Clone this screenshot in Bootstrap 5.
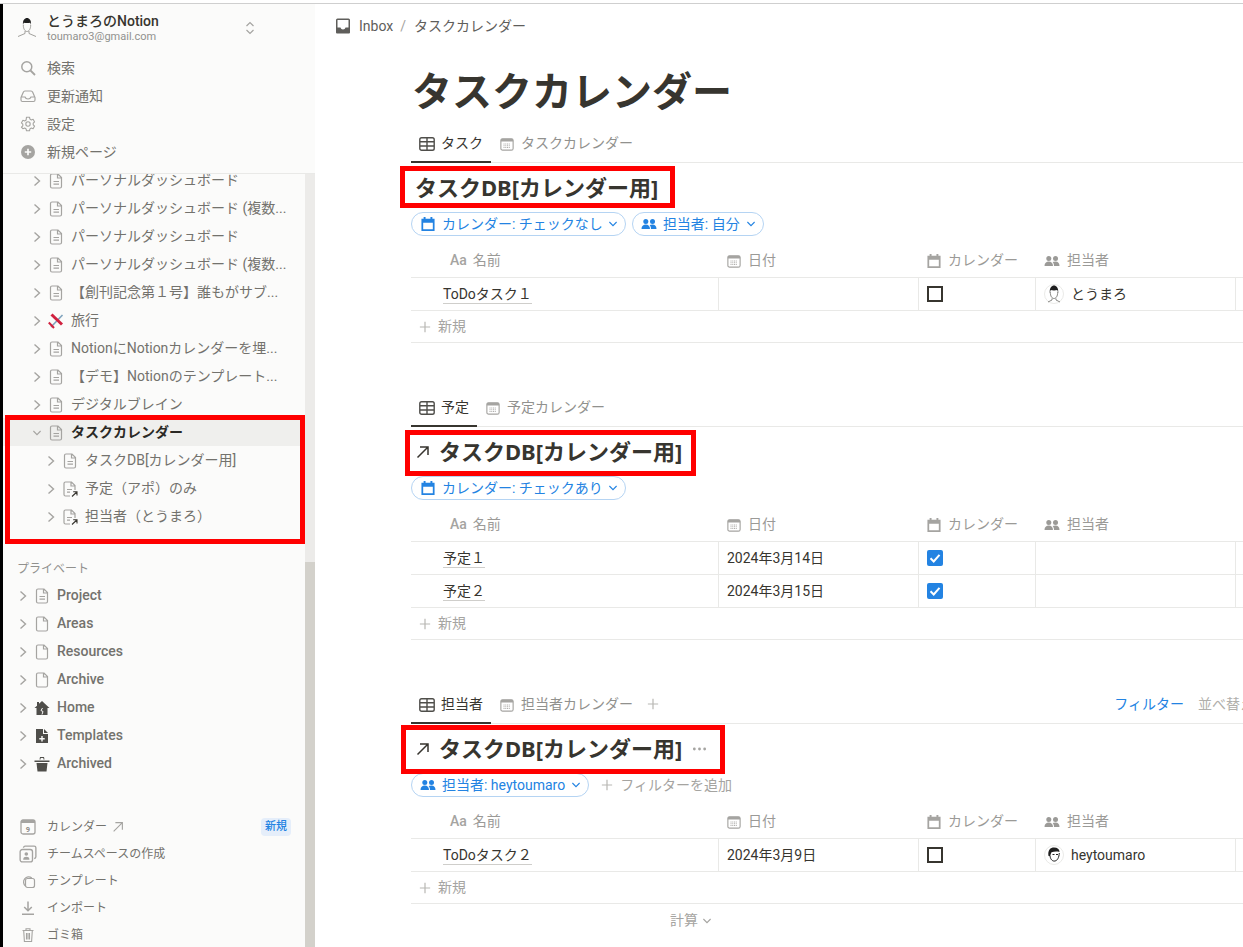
<!DOCTYPE html>
<html lang="ja">
<head>
<meta charset="UTF-8" />
<title>タスクカレンダー</title>
<link href="https://cdn.jsdelivr.net/npm/bootstrap@5.3.3/dist/css/bootstrap.min.css" rel="stylesheet" />
<style>
  html, body { height: 947px; overflow: hidden; }
  body { font-family: Roboto, "Noto Sans CJK JP", sans-serif; font-size: 14px; color: #37352f; background: #fff; padding-top: 3px; }
  .app { height: 944px; border-top: 1px solid #cfcfcf; }
  svg { flex-shrink: 0; display: block; }

  /* sidebar */
  .sidebar { width: 315px; flex-shrink: 0; background: #fbfbfa; border-left: 3px solid #000; color: #73726d; }
  .side-head { height: 170px; border-bottom: 1px solid #e9e9e7; }
  .account { height: 50px; padding: 0 60px 2px 13px; }
  .account .avatar-lg { margin-right: 9px; }
  .account-name { color: #37352f; line-height: 18px; font-weight: 500; }
  .account-mail { font-size: 11px; line-height: 14px; color: #91918e; }
  .head-row { height: 28px; padding-left: 17px; gap: 11px; }
  .side-body { min-height: 0; overflow: hidden; }
  .tree { margin-top: -8px; }
  .side-row { height: 28px; white-space: nowrap; padding-top: 2px; }
  .lv0 { padding-left: 15px; font-weight: 500; }
  .lv1 { padding-left: 29px; }
  .lv2 { padding-left: 43px; }
  .side-row .chev { margin-right: 6px; }
  .side-row .ico { margin-right: 7px; }
  .side-row.selected { background: #efefed; color: #2a2925; font-weight: 700; }
  .chev-grey { color: #a5a4a1; }
  .picked { position: relative; }
  .private-label { height: 24px; margin-top: 27px; padding-left: 14px; font-size: 12px; line-height: 24px; color: #91918e; }
  .side-foot { margin-top: 36px; font-size: 12px; }
  .foot-row { height: 27px; padding: 2px 14px 0 17px; gap: 11px; }
  .foot-label { gap: 4px; }
  .team-ico { margin: 0 -1px; }
  .badge-new { background: #e5eefa; color: #2383e2; font-size: 11px; line-height: 18px; padding: 0 4px; border-radius: 4px; font-weight: 500; }
  .track { width: 10px; flex-shrink: 0; background: #ecebe9; }
  .track-space { height: 388px; }
  .thumb { background: #d3d1cb; }

  /* main */
  .main { min-width: 0; overflow: hidden; }
  .crumbs { height: 44px; padding-left: 20px; color: #5f5e5b; }
  .crumbs .sep { color: #a5a4a1; margin: 0 8px 0 7px; }
  .content { padding-left: 96px; }
  .page-title { font-family: "Noto Sans CJK JP", sans-serif; font-size: 40px; line-height: 70px; font-weight: 700; margin: 6px 0 0 1px; color: #37352f; }
  .block { width: 843px; margin-bottom: 45px; }
  .tabs { height: 39px; border-bottom: 1px solid #e9e9e7; }
  .tab { height: 39px; padding: 0 8px; gap: 7px; color: #91918e; margin-bottom: -1px; }
  .tab.side { margin-left: 1px; }
  .tab.active { color: #37352f; border-bottom: 2px solid #37352f; gap: 6px; padding-top: 2px; }
  .tab-plus { margin-left: 6px; }
  .tab-links { gap: 14px; color: #b0afab; }
  .tab-links .blue { color: #2383e2; }
  .db-title { position: relative; height: 49px; padding-left: 4px; font-family: "Noto Sans", "Noto Sans CJK JP", sans-serif; font-size: 22px; font-weight: 700; gap: 8px; }
  .db-more { margin-left: 2px; }
  .red-box { position: absolute; border: 5px solid #f00; pointer-events: none; }
  .red-1 { left: -11px; top: 3px; width: 275px; height: 42px; }
  .red-2 { left: -6px; top: 3px; width: 291px; height: 46px; }
  .red-3 { left: -10px; top: 1px; width: 324px; height: 49px; }
  .red-side { left: 2px; top: -3px; width: 300px; height: 129px; }
  .filters { height: 24px; gap: 6px; }
  .pill { height: 24px; border: 1px solid #b5d4f3; border-radius: 12px; color: #2383e2; padding: 0 7px 0 9px; gap: 7px; background: #fff; }
  .pill .pill-chev { margin-left: -2px; }
  .pill.people { padding-left: 8px; gap: 6px; }
  .pill.people .pill-chev { margin-left: 0; }
  .add-filter { color: #a5a4a1; gap: 7px; margin-left: 6px; }
  .db-head { margin-top: 8px; height: 34px; border-bottom: 1px solid #e9e9e7; color: #9b9a97; }
  .ic-muted { color: #a5a4a1; }
  .db-row { height: 33px; border-bottom: 1px solid #e9e9e7; }
  .c-name { width: 308px; flex-shrink: 0; }
  .c-date { width: 200px; flex-shrink: 0; }
  .c-cal { width: 117px; flex-shrink: 0; }
  .c-person { width: 200px; flex-shrink: 0; }
  .cell { padding-left: 8px; gap: 7px; height: 100%; }
  .db-row .cell { border-right: 1px solid #e9e9e7; }
  .db-row .cell:last-child { border-right: 0; }
  .db-head .c-name { padding-left: 39px; gap: 6px; }
  .aa { font-weight: 500; color: #a5a4a1; }
  .row-title { margin-left: 24px; line-height: 18px; border-bottom: 1px solid #cfcecb; }
  .check { width: 16px; height: 16px; border: 2px solid #37352f; }
  .check.on { background: #2383e2; border: 0; border-radius: 2px; }
  .db-new { height: 32px; border-bottom: 1px solid #e9e9e7; padding-left: 8px; gap: 7px; color: #a5a4a1; }
  .calc { height: 33px; padding-left: 259px; gap: 4px; color: #a5a4a1; }
</style>
</head>
<body>

<svg class="d-none" xmlns="http://www.w3.org/2000/svg">
  <symbol id="i-chev" viewBox="0 0 10 14"><path d="M2.500 2.500 7.500 7l-5 4.500" fill="none" stroke="#a5a4a1" stroke-width="1.400"/></symbol>
  <symbol id="i-chev-d" viewBox="0 0 12 10"><path d="M1.500 2.500 6 7l4.500-4.500" fill="none" stroke="currentColor" stroke-width="1.400"/></symbol>
  <symbol id="i-page" viewBox="0 0 16 16"><path d="M3.500 1h6l3.500 3.500v9A1.500 1.500 0 0 1 11.500 15h-8A1.500 1.500 0 0 1 2 13.500v-11A1.500 1.500 0 0 1 3.500 1ZM9 1.500V5h3.700M5 8.500h5.500M5 11.200h5.500" transform="translate(.5)" fill="none" stroke="#a5a4a1" stroke-width="1.200"/></symbol>
  <symbol id="i-blank" viewBox="0 0 16 16"><path d="M3.500 1h6l3.500 3.500v9A1.500 1.500 0 0 1 11.500 15h-8A1.500 1.500 0 0 1 2 13.500v-11A1.500 1.500 0 0 1 3.500 1ZM9 1.500V5h3.700" transform="translate(.5)" fill="none" stroke="#a5a4a1" stroke-width="1.200"/></symbol>
  <symbol id="i-link" viewBox="0 0 16 16"><path d="M3.500 1h6l3.500 3.500V9M9 1.500V5h3.700M5 8.500h5M5 11.200h3M8 15H3.500A1.500 1.500 0 0 1 2 13.500v-11A1.500 1.500 0 0 1 3.500 1" fill="none" stroke="#a5a4a1" stroke-width="1.200"/><path d="M10 15.500l4.800-4.500M11.200 10.800h3.800v3.800" fill="none" stroke="#37352f" stroke-width="1.100"/></symbol>
  <symbol id="i-search" viewBox="0 0 16 16"><circle cx="6.800" cy="6.800" r="5" fill="none" stroke="#a5a4a1" stroke-width="1.500"/><path d="M10.500 10.500 15 15" stroke="#a5a4a1" stroke-width="1.800"/></symbol>
  <symbol id="i-inbox" viewBox="0 0 16 16"><path d="M1 9.500 3.300 4.200A2 2 0 0 1 5 3h6a2 2 0 0 1 1.700 1.200L15 9.500V12a1.500 1.500 0 0 1-1.500 1.500h-11A1.500 1.500 0 0 1 1 12ZM1 9h4c.5 1.400 1.500 2 3 2s2.500-.6 3-2h4" fill="none" stroke="#a5a4a1" stroke-width="1.200"/></symbol>
  <symbol id="i-gear" viewBox="0 0 16 16"><path d="M6.500 1.200h3l.4 1.900 1.400.8 1.800-.6 1.500 2.600-1.400 1.300v1.600l1.400 1.300-1.500 2.600-1.800-.6-1.400.8-.4 1.900h-3l-.4-1.900-1.400-.8-1.800.6L1.400 11.100l1.400-1.300V8.200L1.400 6.900l1.500-2.600 1.800.6 1.400-.8Z" fill="none" stroke="#a5a4a1" stroke-width="1.100" stroke-linejoin="round"/><circle cx="8" cy="8" r="2.200" fill="none" stroke="#a5a4a1" stroke-width="1.100"/></symbol>
  <symbol id="i-plus-c" viewBox="0 0 16 16"><circle cx="8" cy="8" r="7" fill="#a5a4a1"/><path d="M8 4.800v6.400M4.800 8h6.400" stroke="#fbfbfa" stroke-width="1.700"/></symbol>
  <symbol id="i-updown" viewBox="0 0 10 14"><path d="M1.500 5 5 1.500 8.500 5M1.500 9 5 12.500 8.500 9" fill="none" stroke="#a5a4a1" stroke-width="1.200"/></symbol>
  <symbol id="i-plane" viewBox="0 0 16 16"><path d="M3 14 14.500 2" stroke="#7fa3bd" stroke-width="1.600"/><path d="M3.500 1.500 14 11.500" stroke="#d0213f" stroke-width="3"/><path d="M.800 9.500 6 15" stroke="#d0213f" stroke-width="2"/></symbol>
  <symbol id="i-home" viewBox="0 0 16 16"><path d="M8 1 15.500 8H13.500v7H2.500V8H.500L3 5.700V2h2v1.800Z" fill="#4f4e4a"/><path d="M8.500 8 7 10.500l2 1-1 3" fill="none" stroke="#fbfbfa" stroke-width="1"/></symbol>
  <symbol id="i-tpl" viewBox="0 0 16 16"><path d="M2 1h7v5h5v9H2Z M10 1l4 4h-4Z" fill="#4f4e4a"/><path d="M8 8v5.500M5.300 10.800h5.400" stroke="#fbfbfa" stroke-width="1.400"/></symbol>
  <symbol id="i-trash-f" viewBox="0 0 16 16"><path d="M.500 4.500h15V6H.500ZM6 1h4l.5 2.500h-1L9.300 2H6.700l-.2 1.500h-1ZM2.500 7h11l-1 8.500h-9Z" fill="#4f4e4a"/></symbol>
  <symbol id="i-cal9" viewBox="0 0 16 16"><rect x="1" y="1" width="14" height="14" rx="2" fill="none" stroke="#a5a4a1" stroke-width="1.300"/><path d="M1 2.500a1.500 1.500 0 0 1 1.500-1.500h11A1.500 1.500 0 0 1 15 2.500V4H1Z" fill="#a5a4a1"/><text x="8" y="12.800" text-anchor="middle" font-size="7.500" font-weight="700" fill="#8e8d89">9</text></symbol>
  <symbol id="i-team" viewBox="0 0 16 16"><rect x="1" y="4" width="11" height="11" rx="2" fill="none" stroke="#a5a4a1" stroke-width="1.200"/><path d="M4 2.500A1.500 1.500 0 0 1 5.500 1h8A1.500 1.500 0 0 1 15 2.500v8a1.500 1.500 0 0 1-1.500 1.500" fill="none" stroke="#a5a4a1" stroke-width="1.200"/><circle cx="6.500" cy="8" r="1.600" fill="#a5a4a1"/><path d="M3.700 13c0-2 1.300-2.600 2.800-2.600s2.800.6 2.800 2.600Z" fill="#a5a4a1"/></symbol>
  <symbol id="i-copy" viewBox="0 0 16 16"><path d="M5.500 13A4.800 4.800 0 1 1 11.800 5" fill="none" stroke="#a5a4a1" stroke-width="1.200"/><rect x="5.500" y="5.500" width="9" height="9" rx="2" fill="#fbfbfa" stroke="#a5a4a1" stroke-width="1.200"/></symbol>
  <symbol id="i-import" viewBox="0 0 16 16"><path d="M8 1.500v9M4.200 7 8 10.800 11.800 7M2 14.300h12" fill="none" stroke="#a5a4a1" stroke-width="1.500"/></symbol>
  <symbol id="i-trash" viewBox="0 0 16 16"><path d="M2.500 3.500h11M6 3.500V1.800h4v1.700M3.700 3.500l.7 11h7.200l.7-11M6.500 6v6.500M8 6v6.500M9.500 6v6.500" fill="none" stroke="#a5a4a1" stroke-width="1.100"/></symbol>
  <symbol id="i-arrow" viewBox="0 0 16 16"><path d="M3 13 13 3M5 3h8v8" fill="none" stroke="#a5a4a1" stroke-width="1.300"/></symbol>
  <symbol id="i-arrow-d" viewBox="0 0 16 16"><path d="M2.500 13.500 13 3M5 3h8v8" fill="none" stroke="#37352f" stroke-width="1.500"/></symbol>
  <symbol id="i-tray" viewBox="0 0 16 16"><path d="M2.500 .5h11A1.500 1.500 0 0 1 15 2v12.500a1 1 0 0 1-1 1H2a1 1 0 0 1-1-1V2A1.500 1.500 0 0 1 2.500 .5Z" fill="#5f5e5b"/><path d="M2.500 2h11v7.500H10.500c-.3 1.300-1.200 2-2.500 2s-2.200-.7-2.500-2h-3Z" fill="#fff"/></symbol>
  <symbol id="i-table" viewBox="0 0 16 16"><rect x=".8" y="1.800" width="14.400" height="12.400" rx="1.800" fill="none" stroke="#4f4e4a" stroke-width="1.400"/><path d="M1 5.800h14M1 10h14M8 2v12" stroke="#4f4e4a" stroke-width="1.400"/></symbol>
  <symbol id="i-calview" viewBox="0 0 16 16"><rect x="1" y="2" width="14" height="13" rx="2" fill="none" stroke="#a5a4a1" stroke-width="1.300"/><path d="M1 3.500A1.500 1.500 0 0 1 2.500 2h11A1.500 1.500 0 0 1 15 3.500V5H1Z" fill="#a5a4a1"/><path d="M4 8h8M4 10h8M4 12h8" stroke="#a5a4a1" stroke-width="1" stroke-dasharray="1.200 .8"/></symbol>
  <symbol id="i-calfill" viewBox="0 0 16 16"><path d="M3 0h2.200v2h5.600V0H13v2h2.500v14H.500V2H3Zm-.5 6.500v7.500h11V6.500Z" fill="currentColor" fill-rule="evenodd"/></symbol>
  <symbol id="i-people" viewBox="0 0 16 16"><circle cx="4.800" cy="5.500" r="2.500" fill="currentColor"/><circle cx="11.500" cy="5.500" r="2.500" fill="currentColor"/><path d="M.500 13c0-3 1.800-4.500 4.300-4.500S9 10 9 13ZM10 13c0-1.700-.5-3-1.400-3.900.8-.4 1.800-.6 2.900-.6 2.500 0 4 1.500 4 4.500Z" fill="currentColor"/></symbol>
  <symbol id="i-plus" viewBox="0 0 14 14"><path d="M7 1v12M1 7h12" stroke="#b8b7b3" stroke-width="1.400"/></symbol>
  <symbol id="i-tick" viewBox="0 0 16 16"><path d="M3.500 8.300 6.700 11.500 12.500 4.800" fill="none" stroke="#fff" stroke-width="2"/></symbol>
  <symbol id="i-dots" viewBox="0 0 16 4"><circle cx="2.500" cy="2" r="1.500" fill="#a5a4a1"/><circle cx="8" cy="2" r="1.500" fill="#a5a4a1"/><circle cx="13.500" cy="2" r="1.500" fill="#a5a4a1"/></symbol>
  <symbol id="i-man" viewBox="0 0 22 22"><path d="M7 8C6.500 3 8.800 1 11 1s4.500 2 4 7l-.7-2.300c-2 .5-4.300.5-6.600 0Z" fill="#1f1f1f"/><path d="M7.300 8c0 4 1.800 6.500 3.700 6.500s3.700-2.500 3.700-6.500M9 14v2.500l-7 3M13 14v2.500l7 3" fill="none" stroke="#8a8984" stroke-width=".8"/></symbol>
  <symbol id="i-face" viewBox="0 0 20 20"><circle cx="10" cy="10" r="9.500" fill="#fff" stroke="#e3e3e1" stroke-width=".8"/><path d="M5.800 9C5.300 3.500 7.800 1.500 10 1.500s4.700 2 4.200 7.500l-.9-3c-2 .5-4.600.5-6.600 0Z" fill="#1f1f1f"/><path d="M6.300 8c0 4.500 1.800 6.500 3.700 6.500s3.700-2 3.700-6.500M8 14.500v1.500L4 18M12 14.500v1.500l4 2" fill="none" stroke="#6b6a66" stroke-width=".8"/></symbol>
  <symbol id="i-face2" viewBox="0 0 20 20"><circle cx="10" cy="10" r="9.500" fill="#fff" stroke="#e3e3e1" stroke-width=".8"/><path d="M4.500 11C3.500 5 6.500 2.500 10 2.500s5.500 1.500 5.500 4.500c-2.500-.6-5.500-.5-8 .3-.6 1-1 2.200-1.200 3.700Z" fill="#1f1f1f"/><path d="M6 11c.5 3.500 2.500 5.500 5 5 2.500-.5 4-3.500 4.300-8" fill="none" stroke="#1f1f1f" stroke-width="1"/><path d="M8.500 9.500h2M12 9.500h2" stroke="#1f1f1f" stroke-width="1"/></symbol>
</svg>

<div class="app d-flex">
  <aside class="sidebar d-flex flex-column">
    <div class="side-head">
      <div class="account d-flex align-items-center">
        <svg class="avatar-lg" width="22" height="22"><use href="#i-man"/></svg>
        <div class="flex-grow-1">
          <div class="account-name">とうまろのNotion</div>
          <div class="account-mail">toumaro3@gmail.com</div>
        </div>
        <svg width="10" height="14"><use href="#i-updown"/></svg>
      </div>
      <div class="head-row d-flex align-items-center"><svg width="16" height="16"><use href="#i-search"/></svg>検索</div>
      <div class="head-row d-flex align-items-center"><svg width="16" height="16"><use href="#i-inbox"/></svg>更新通知</div>
      <div class="head-row d-flex align-items-center"><svg width="16" height="16"><use href="#i-gear"/></svg>設定</div>
      <div class="head-row d-flex align-items-center"><svg width="16" height="16"><use href="#i-plus-c"/></svg>新規ページ</div>
    </div>

    <div class="side-body flex-grow-1 d-flex">
      <div class="flex-grow-1">
        <div class="tree">
          <div class="side-row lv1 d-flex align-items-center"><svg class="chev" width="10" height="14"><use href="#i-chev"/></svg><svg class="ico" width="16" height="16"><use href="#i-page"/></svg>パーソナルダッシュボード</div>
          <div class="side-row lv1 d-flex align-items-center"><svg class="chev" width="10" height="14"><use href="#i-chev"/></svg><svg class="ico" width="16" height="16"><use href="#i-page"/></svg>パーソナルダッシュボード (複数...</div>
          <div class="side-row lv1 d-flex align-items-center"><svg class="chev" width="10" height="14"><use href="#i-chev"/></svg><svg class="ico" width="16" height="16"><use href="#i-page"/></svg>パーソナルダッシュボード</div>
          <div class="side-row lv1 d-flex align-items-center"><svg class="chev" width="10" height="14"><use href="#i-chev"/></svg><svg class="ico" width="16" height="16"><use href="#i-page"/></svg>パーソナルダッシュボード (複数...</div>
          <div class="side-row lv1 d-flex align-items-center"><svg class="chev" width="10" height="14"><use href="#i-chev"/></svg><svg class="ico" width="16" height="16"><use href="#i-page"/></svg>【創刊記念第１号】誰もがサブ...</div>
          <div class="side-row lv1 d-flex align-items-center"><svg class="chev" width="10" height="14"><use href="#i-chev"/></svg><svg class="ico" width="16" height="16"><use href="#i-plane"/></svg>旅行</div>
          <div class="side-row lv1 d-flex align-items-center"><svg class="chev" width="10" height="14"><use href="#i-chev"/></svg><svg class="ico" width="16" height="16"><use href="#i-page"/></svg>NotionにNotionカレンダーを埋...</div>
          <div class="side-row lv1 d-flex align-items-center"><svg class="chev" width="10" height="14"><use href="#i-chev"/></svg><svg class="ico" width="16" height="16"><use href="#i-page"/></svg>【デモ】Notionのテンプレート...</div>
          <div class="side-row lv1 d-flex align-items-center"><svg class="chev" width="10" height="14"><use href="#i-chev"/></svg><svg class="ico" width="16" height="16"><use href="#i-page"/></svg>デジタルブレイン</div>
          <div class="picked">
            <div class="side-row lv1 selected d-flex align-items-center"><svg class="chev chev-grey" width="10" height="8"><use href="#i-chev-d"/></svg><svg class="ico" width="16" height="16"><use href="#i-page"/></svg>タスクカレンダー</div>
            <div class="side-row lv2 d-flex align-items-center"><svg class="chev" width="10" height="14"><use href="#i-chev"/></svg><svg class="ico" width="16" height="16"><use href="#i-page"/></svg>タスクDB[カレンダー用]</div>
            <div class="side-row lv2 d-flex align-items-center"><svg class="chev" width="10" height="14"><use href="#i-chev"/></svg><svg class="ico" width="16" height="16"><use href="#i-link"/></svg>予定（アポ）のみ</div>
            <div class="side-row lv2 d-flex align-items-center"><svg class="chev" width="10" height="14"><use href="#i-chev"/></svg><svg class="ico" width="16" height="16"><use href="#i-link"/></svg>担当者（とうまろ）</div>
            <div class="red-box red-side"></div>
          </div>
          <div class="private-label">プライベート</div>
          <div class="side-row lv0 d-flex align-items-center"><svg class="chev" width="10" height="14"><use href="#i-chev"/></svg><svg class="ico" width="16" height="16"><use href="#i-page"/></svg>Project</div>
          <div class="side-row lv0 d-flex align-items-center"><svg class="chev" width="10" height="14"><use href="#i-chev"/></svg><svg class="ico" width="16" height="16"><use href="#i-blank"/></svg>Areas</div>
          <div class="side-row lv0 d-flex align-items-center"><svg class="chev" width="10" height="14"><use href="#i-chev"/></svg><svg class="ico" width="16" height="16"><use href="#i-blank"/></svg>Resources</div>
          <div class="side-row lv0 d-flex align-items-center"><svg class="chev" width="10" height="14"><use href="#i-chev"/></svg><svg class="ico" width="16" height="16"><use href="#i-blank"/></svg>Archive</div>
          <div class="side-row lv0 d-flex align-items-center"><svg class="chev" width="10" height="14"><use href="#i-chev"/></svg><svg class="ico" width="16" height="16"><use href="#i-home"/></svg>Home</div>
          <div class="side-row lv0 d-flex align-items-center"><svg class="chev" width="10" height="14"><use href="#i-chev"/></svg><svg class="ico" width="16" height="16"><use href="#i-tpl"/></svg>Templates</div>
          <div class="side-row lv0 d-flex align-items-center"><svg class="chev" width="10" height="14"><use href="#i-chev"/></svg><svg class="ico" width="16" height="16"><use href="#i-trash-f"/></svg>Archived</div>
        </div>
        <div class="side-foot">
          <div class="foot-row d-flex align-items-center"><svg width="16" height="16"><use href="#i-cal9"/></svg><span class="foot-label d-flex align-items-center">カレンダー<svg width="14" height="14"><use href="#i-arrow"/></svg></span><span class="badge-new ms-auto">新規</span></div>
          <div class="foot-row d-flex align-items-center"><svg class="team-ico" width="18" height="18"><use href="#i-team"/></svg>チームスペースの作成</div>
          <div class="foot-row d-flex align-items-center"><svg width="16" height="16"><use href="#i-copy"/></svg>テンプレート</div>
          <div class="foot-row d-flex align-items-center"><svg width="16" height="16"><use href="#i-import"/></svg>インポート</div>
          <div class="foot-row d-flex align-items-center"><svg width="16" height="16"><use href="#i-trash"/></svg>ゴミ箱</div>
        </div>
      </div>
      <div class="track d-flex flex-column">
        <div class="track-space"></div>
        <div class="thumb flex-grow-1"></div>
      </div>
    </div>
  </aside>

  <main class="main flex-grow-1">
    <div class="crumbs d-flex align-items-center">
      <svg class="me-2" width="16" height="16"><use href="#i-tray"/></svg>Inbox<span class="sep">/</span>タスクカレンダー
    </div>
    <div class="content">
      <h1 class="page-title">タスクカレンダー</h1>

      <section class="block">
        <div class="tabs d-flex">
          <div class="tab active d-flex align-items-center"><svg width="16" height="16"><use href="#i-table"/></svg>タスク</div>
          <div class="tab side d-flex align-items-center"><svg width="14" height="14"><use href="#i-calview"/></svg>タスクカレンダー</div>
        </div>
        <div class="db-title d-flex align-items-center">タスクDB[カレンダー用]<div class="red-box red-1"></div></div>
        <div class="filters d-flex">
          <div class="pill d-flex align-items-center"><svg width="14" height="14"><use href="#i-calfill"/></svg>カレンダー: チェックなし<svg class="pill-chev" width="10" height="8"><use href="#i-chev-d"/></svg></div>
          <div class="pill people d-flex align-items-center"><svg width="16" height="16"><use href="#i-people"/></svg>担当者: 自分<svg class="pill-chev" width="10" height="8"><use href="#i-chev-d"/></svg></div>
        </div>
        <div class="db-head d-flex align-items-center">
          <div class="c-name cell d-flex align-items-center"><span class="aa">Aa</span>名前</div>
          <div class="c-date cell d-flex align-items-center"><svg width="14" height="14"><use href="#i-calview"/></svg>日付</div>
          <div class="c-cal cell d-flex align-items-center"><svg class="ic-muted" width="14" height="14"><use href="#i-calfill"/></svg>カレンダー</div>
          <div class="c-person cell d-flex align-items-center"><svg width="16" height="16"><use href="#i-people"/></svg>担当者</div>
        </div>
        <div class="db-row d-flex">
          <div class="c-name cell d-flex align-items-center"><span class="row-title">ToDoタスク１</span></div>
          <div class="c-date cell d-flex align-items-center"></div>
          <div class="c-cal cell d-flex align-items-center"><div class="check"></div></div>
          <div class="c-person cell d-flex align-items-center"><svg width="20" height="20"><use href="#i-face"/></svg>とうまろ</div>
          <div class="cell flex-grow-1"></div>
        </div>
        <div class="db-new d-flex align-items-center"><svg width="12" height="12"><use href="#i-plus"/></svg>新規</div>
      </section>

      <section class="block">
        <div class="tabs d-flex">
          <div class="tab active d-flex align-items-center"><svg width="16" height="16"><use href="#i-table"/></svg>予定</div>
          <div class="tab side d-flex align-items-center"><svg width="14" height="14"><use href="#i-calview"/></svg>予定カレンダー</div>
        </div>
        <div class="db-title d-flex align-items-center"><svg width="16" height="16"><use href="#i-arrow-d"/></svg>タスクDB[カレンダー用]<div class="red-box red-2"></div></div>
        <div class="filters d-flex">
          <div class="pill d-flex align-items-center"><svg width="14" height="14"><use href="#i-calfill"/></svg>カレンダー: チェックあり<svg class="pill-chev" width="10" height="8"><use href="#i-chev-d"/></svg></div>
        </div>
        <div class="db-head d-flex align-items-center">
          <div class="c-name cell d-flex align-items-center"><span class="aa">Aa</span>名前</div>
          <div class="c-date cell d-flex align-items-center"><svg width="14" height="14"><use href="#i-calview"/></svg>日付</div>
          <div class="c-cal cell d-flex align-items-center"><svg class="ic-muted" width="14" height="14"><use href="#i-calfill"/></svg>カレンダー</div>
          <div class="c-person cell d-flex align-items-center"><svg width="16" height="16"><use href="#i-people"/></svg>担当者</div>
        </div>
        <div class="db-row d-flex">
          <div class="c-name cell d-flex align-items-center"><span class="row-title">予定１</span></div>
          <div class="c-date cell d-flex align-items-center">2024年3月14日</div>
          <div class="c-cal cell d-flex align-items-center"><div class="check on"><svg width="16" height="16"><use href="#i-tick"/></svg></div></div>
          <div class="c-person cell d-flex align-items-center"></div>
          <div class="cell flex-grow-1"></div>
        </div>
        <div class="db-row d-flex">
          <div class="c-name cell d-flex align-items-center"><span class="row-title">予定２</span></div>
          <div class="c-date cell d-flex align-items-center">2024年3月15日</div>
          <div class="c-cal cell d-flex align-items-center"><div class="check on"><svg width="16" height="16"><use href="#i-tick"/></svg></div></div>
          <div class="c-person cell d-flex align-items-center"></div>
          <div class="cell flex-grow-1"></div>
        </div>
        <div class="db-new d-flex align-items-center"><svg width="12" height="12"><use href="#i-plus"/></svg>新規</div>
      </section>

      <section class="block">
        <div class="tabs d-flex align-items-center">
          <div class="tab active d-flex align-items-center"><svg width="16" height="16"><use href="#i-table"/></svg>担当者</div>
          <div class="tab side d-flex align-items-center"><svg width="14" height="14"><use href="#i-calview"/></svg>担当者カレンダー</div>
          <svg class="tab-plus" width="12" height="12"><use href="#i-plus"/></svg>
          <div class="tab-links d-flex ms-auto"><span class="blue">フィルター</span><span>並べ替え</span></div>
        </div>
        <div class="db-title d-flex align-items-center"><svg width="16" height="16"><use href="#i-arrow-d"/></svg>タスクDB[カレンダー用]<svg class="db-more" width="15" height="4"><use href="#i-dots"/></svg><div class="red-box red-3"></div></div>
        <div class="filters d-flex">
          <div class="pill people d-flex align-items-center"><svg width="16" height="16"><use href="#i-people"/></svg>担当者: heytoumaro<svg class="pill-chev" width="10" height="8"><use href="#i-chev-d"/></svg></div>
          <div class="add-filter d-flex align-items-center"><svg width="12" height="12"><use href="#i-plus"/></svg>フィルターを追加</div>
        </div>
        <div class="db-head d-flex align-items-center">
          <div class="c-name cell d-flex align-items-center"><span class="aa">Aa</span>名前</div>
          <div class="c-date cell d-flex align-items-center"><svg width="14" height="14"><use href="#i-calview"/></svg>日付</div>
          <div class="c-cal cell d-flex align-items-center"><svg class="ic-muted" width="14" height="14"><use href="#i-calfill"/></svg>カレンダー</div>
          <div class="c-person cell d-flex align-items-center"><svg width="16" height="16"><use href="#i-people"/></svg>担当者</div>
        </div>
        <div class="db-row d-flex">
          <div class="c-name cell d-flex align-items-center"><span class="row-title">ToDoタスク２</span></div>
          <div class="c-date cell d-flex align-items-center">2024年3月9日</div>
          <div class="c-cal cell d-flex align-items-center"><div class="check"></div></div>
          <div class="c-person cell d-flex align-items-center"><svg width="20" height="20"><use href="#i-face2"/></svg>heytoumaro</div>
          <div class="cell flex-grow-1"></div>
        </div>
        <div class="db-new d-flex align-items-center"><svg width="12" height="12"><use href="#i-plus"/></svg>新規</div>
        <div class="calc d-flex align-items-center">計算<svg width="10" height="8"><use href="#i-chev-d"/></svg></div>
      </section>
    </div>
  </main>
</div>
</body>
</html>
